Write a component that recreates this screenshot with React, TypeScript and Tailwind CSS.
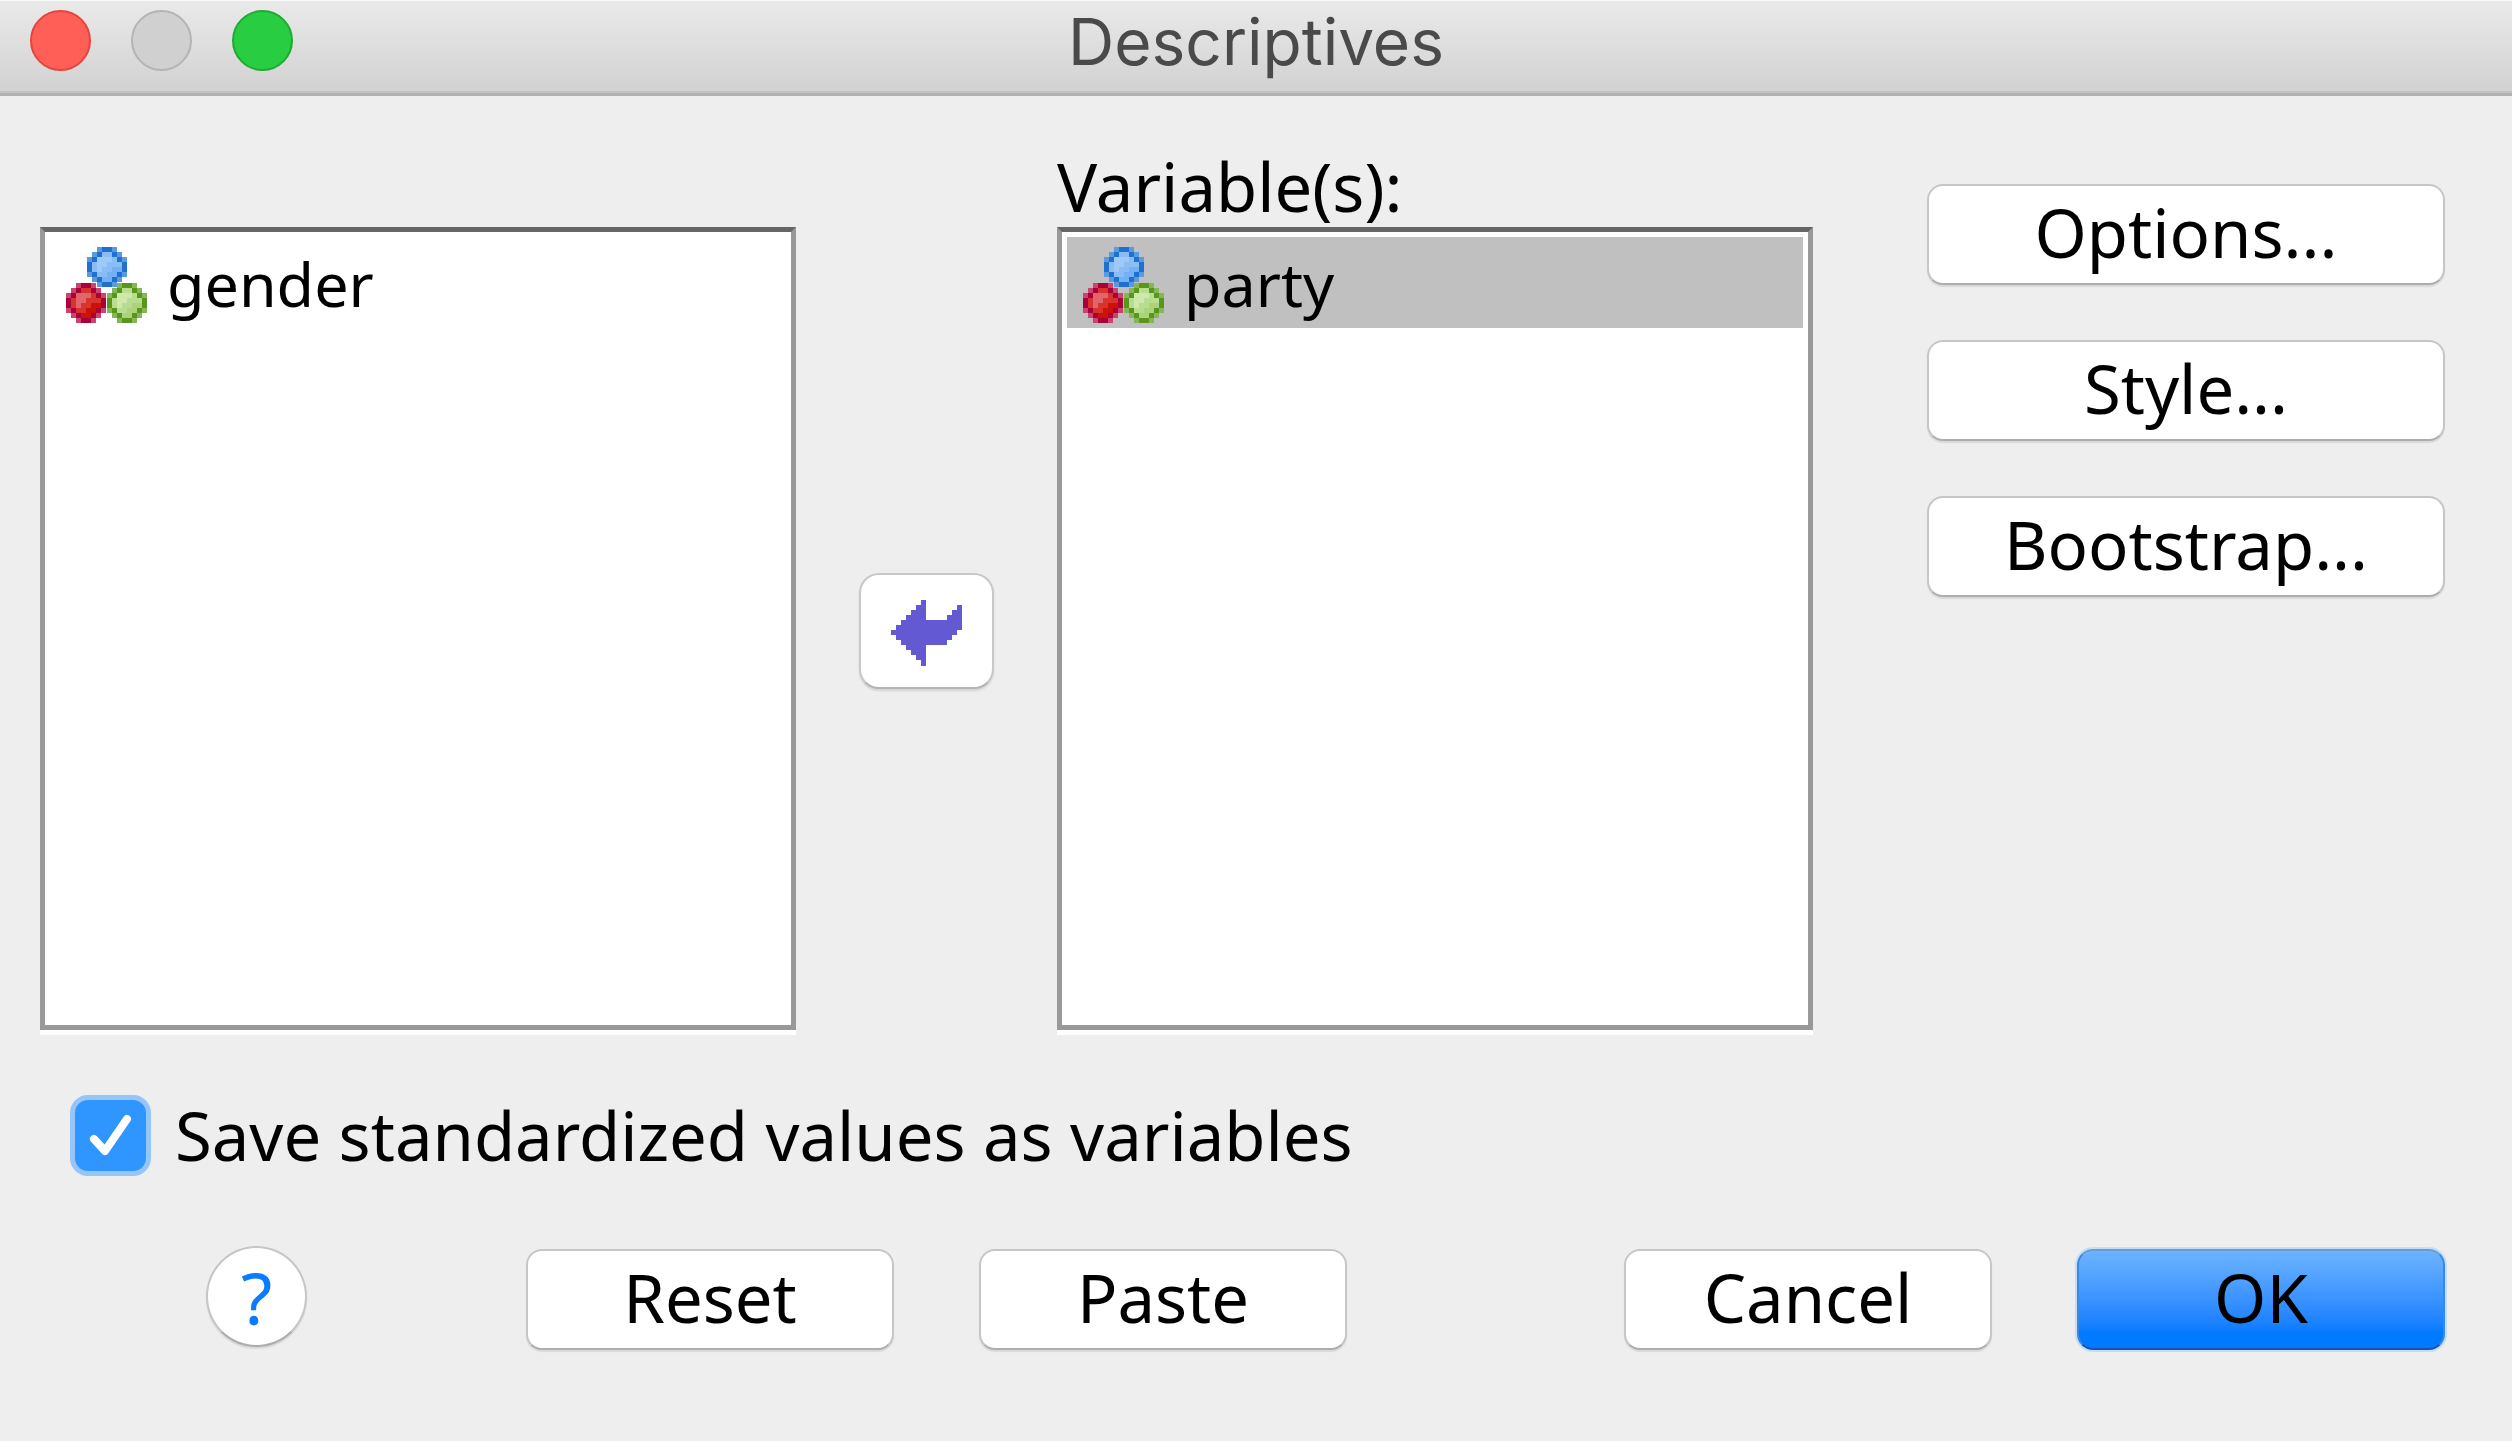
import { useState, type ReactNode } from "react"
import clsx from "clsx"

type BallColors = { l: string; d: string; h: string; m: string; s: string }

const BALL = [
  "..lddl..",
  ".ldmmdl.",
  "ldhhhmdl",
  "dmhhmmmd",
  "dmhmmssd",
  "ldmmssdl",
  ".ldssdl.",
  "..lddl..",
]

const BLUE: BallColors = { l: "#5c9ae0", d: "#1f70cf", h: "#9fc9f7", m: "#8abcf5", s: "#74b0f7" }
const RED: BallColors = { l: "#cb4470", d: "#a90238", h: "#e2656b", m: "#d8332c", s: "#cc1206" }
const GREEN: BallColors = { l: "#85b75a", d: "#5a9619", h: "#cfe9ab", m: "#b7dd90", s: "#abd37c" }

function Ball({ x, y, colors }: { x: number; y: number; colors: BallColors }) {
  return (
    <g transform={`translate(${x} ${y})`}>
      {BALL.flatMap((row, r) =>
        row.split("").map((cell, c) =>
          cell === "." ? null : (
            <rect key={`${r}-${c}`} x={c} y={r} width="1" height="1" fill={colors[cell as keyof BallColors]} />
          ),
        ),
      )}
    </g>
  )
}

function NominalIcon() {
  return (
    <svg viewBox="0 0 16.2 15.2" className="h-[76px] w-[81px] shrink-0" shapeRendering="crispEdges" aria-hidden="true">
      <Ball x={4.2} y={0} colors={BLUE} />
      <Ball x={8.2} y={7.2} colors={GREEN} />
      <Ball x={0} y={7.2} colors={RED} />
    </svg>
  )
}

function VariableList({
  items,
  selected,
  onSelect,
  label,
  labelledBy,
}: {
  items: string[]
  selected?: string
  onSelect: (name: string) => void
  label?: string
  labelledBy?: string
}) {
  return (
    <ul
      role="listbox"
      aria-label={label}
      aria-labelledby={labelledBy}
      className="h-[803px] border-[5px] border-[#999999] border-t-[#666666] bg-white p-[5px] text-[61px] leading-[78px] shadow-[0_5px_0_#ffffff]"
    >
      {items.map((name) => (
        <li
          key={name}
          role="option"
          aria-selected={name === selected}
          onClick={() => onSelect(name)}
          className={clsx("flex h-[91px] items-end gap-5 pb-[5px] pl-4", name === selected && "bg-[#c0c0c0]")}
        >
          <NominalIcon />
          <span>{name}</span>
        </li>
      ))}
    </ul>
  )
}

function PushButton({
  children,
  primary = false,
  className,
}: {
  children: ReactNode
  primary?: boolean
  className?: string
}) {
  return (
    <button
      type="button"
      className={clsx(
        "flex h-[101px] items-center justify-center rounded-2xl border-2 pb-1.5",
        primary
          ? "border-[#3f86dc] border-t-[#6d9bd0] border-b-[#1f50b8] bg-linear-to-b from-[#6cb3ff] to-[#007aff] to-85% shadow-[0_0_0_2px_#bfe0fb]"
          : "border-[#c6c6c6] border-b-[#adadad] bg-white shadow-[0_2px_1px_#d9d9d9]",
        className,
      )}
    >
      {children}
    </button>
  )
}

export default function App() {
  const [source, setSource] = useState<string>()
  const [target, setTarget] = useState<string | undefined>("party")
  const [saveStandardized, setSaveStandardized] = useState(true)

  return (
    <div className="min-h-screen border-r-[5px] border-b border-white bg-[#eeeeee] font-['Noto_Sans',sans-serif] text-[67px] leading-[82px] text-black">
      <header className="grid h-24 grid-cols-[1fr_auto_1fr] items-start border-t border-b-[3px] border-t-[#f8f8f8] border-b-[#b0b0b0] bg-linear-to-b from-[#eaeaea] to-[#d1d1d1] shadow-[inset_0_-2px_0_#c2c2c2]">
        <div className="flex gap-10 pt-[9px] pl-[30px]">
          <button type="button" aria-label="Close" className="size-[61px] rounded-full border-2 border-[#e2463f] bg-[#ff5f57]" />
          <button type="button" aria-label="Minimize" disabled className="size-[61px] rounded-full border-2 border-[#b4b4b4] bg-[#d0d0d0]" />
          <button type="button" aria-label="Zoom" className="size-[61px] rounded-full border-2 border-[#1faa34] bg-[#28cd41]" />
        </div>
        <h1 className="font-['Inter',sans-serif] text-[64px] text-[#4a4a4a]">Descriptives</h1>
      </header>

      <main className="pt-[49px] pr-[67px] pl-10">
        <div className="flex">
          <div className="flex flex-1 flex-col justify-end">
            <VariableList label="Available variables" items={["gender"]} selected={source} onSelect={setSource} />
          </div>

          <button
            type="button"
            aria-label="Move variable"
            className="mx-[63px] mt-[86px] flex h-[116px] w-[135px] items-center justify-center self-center rounded-[20px] border-2 border-[#c8c8c8] border-b-[#b4b4b4] bg-white pt-1 shadow-[0_2px_2px_#d4d4d4]"
          >
            <svg viewBox="0 0 14.2 13.2" className="h-[66px] w-[71px]" fill="#6359d2" shapeRendering="crispEdges" aria-hidden="true">
              <path d="M0 6h1v-1h1v-1h1v-1h1v-1h1v-1h1v-1h1v4h4.2v-1h1v-1h1v-1h1v5h-1v1h-1v1h-1v1h-4.2v4.2h-1v-1.2h-1v-1h-1v-1h-1v-1h-1v-1h-1v-1h-1z" />
            </svg>
          </button>

          <div className="flex-1">
            <h2 id="variables-label">Variable(s):</h2>
            <VariableList labelledBy="variables-label" items={["party"]} selected={target} onSelect={setTarget} />
          </div>

          <div className="ml-[114px] flex w-[518px] flex-col gap-[55px] pt-[39px]">
            <PushButton>Options...</PushButton>
            <PushButton>Style...</PushButton>
            <PushButton>Bootstrap...</PushButton>
          </div>
        </div>

        <label className="mt-16 ml-[30px] flex w-fit items-center gap-6">
          <span className="grid">
            <input
              type="checkbox"
              checked={saveStandardized}
              onChange={(event) => setSaveStandardized(event.target.checked)}
              className="col-start-1 row-start-1 size-[81px] appearance-none rounded-[18px] border-[5px] border-[#c6c6c6] bg-white checked:border-[#96c5f8] checked:bg-[#3096ff]"
            />
            {saveStandardized ? (
              <svg
                viewBox="0 0 81 81"
                className="pointer-events-none col-start-1 row-start-1 size-[81px]"
                fill="none"
                stroke="#ffffff"
                strokeWidth="8"
                strokeLinecap="round"
                strokeLinejoin="round"
                aria-hidden="true"
              >
                <path d="M24 44L35 56L57 24" />
              </svg>
            ) : null}
          </span>
          <span>Save standardized values as variables</span>
        </label>

        <div className="mt-[70px] flex justify-between pl-[166px]">
          <div className="flex items-start">
            <button
              type="button"
              className="mr-[219px] flex size-[101px] items-center justify-center rounded-full border-2 border-[#c6c6c6] border-b-[#adadad] bg-white text-[72px] text-[#0a7aff] shadow-[0_2px_1px_#d9d9d9]"
            >
              ?
            </button>
            <div className="flex gap-[85px] pt-[3px]">
              <PushButton className="w-[368px]">Reset</PushButton>
              <PushButton className="w-[368px]">Paste</PushButton>
            </div>
          </div>
          <div className="flex gap-[85px] pt-[3px]">
            <PushButton className="w-[368px]">Cancel</PushButton>
            <PushButton primary className="w-[368px]">
              OK
            </PushButton>
          </div>
        </div>
      </main>
    </div>
  )
}
